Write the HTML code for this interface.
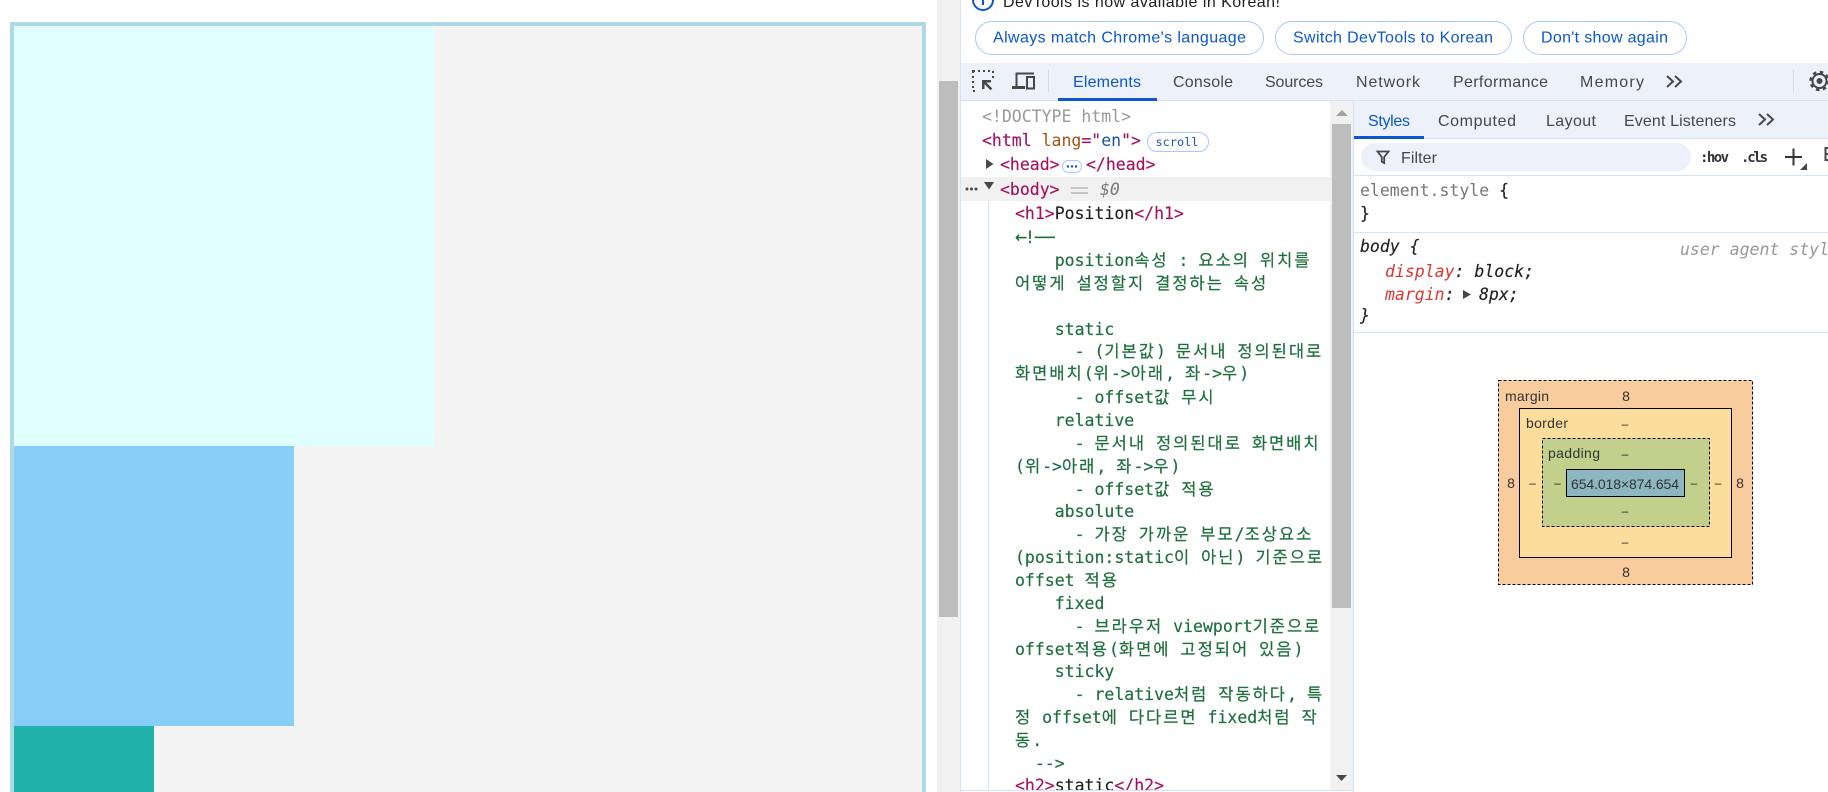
<!DOCTYPE html>
<html lang="en"><head><meta charset="utf-8"><title>DevTools</title>
<style>
html,body{margin:0;padding:0;background:#fff;width:1828px;height:792px;overflow:hidden}
svg{display:block}
text{white-space:pre}
.m{font-family:"DejaVu Sans Mono","Liberation Mono","Noto Sans CJK KR",monospace;font-size:16.5px}
.k{font-family:"Noto Sans CJK KR","NanumGothic",sans-serif;font-size:16.5px;letter-spacing:2px}
.c{fill:#1e6f3e;stroke:#1e6f3e;stroke-width:.2px}
.g{fill:#1f1f1f;stroke:#1f1f1f;stroke-width:.15px}
.tg{fill:#a5115f;stroke:#a5115f;stroke-width:.15px}
.s{font-family:"Liberation Sans",Arial,sans-serif;font-size:16px}
.tab{fill:#474747}
.btn{fill:#0b57d0}
.bm{font-family:"Liberation Sans",Arial,sans-serif;font-size:14px;fill:#333}
.d{font-family:"Liberation Sans",Arial,sans-serif;font-size:12px;fill:#222;text-anchor:middle}
.mid{text-anchor:middle}
.it{font-style:italic}
</style></head>
<body>
<svg width="1828" height="792" viewBox="0 0 1828 792" xmlns="http://www.w3.org/2000/svg">
<!-- page -->
<rect x="10" y="22" width="916" height="780" fill="#add8e6"/>
<rect x="14" y="26" width="908" height="770" fill="#f4f4f4"/>
<rect x="14" y="26" width="420" height="420" fill="#e0ffff"/>
<rect x="14" y="446" width="280" height="280" fill="#87cefa"/>
<rect x="14" y="726" width="140" height="70" fill="#20b2aa"/>
<rect x="937" y="0" width="23" height="792" fill="#f1f1f1"/>
<rect x="939" y="81" width="19" height="536" fill="#bdbdbd"/>
<rect x="960" y="0" width="1" height="792" fill="#d3e3fd"/>

<!-- info bar -->
<circle cx="983" cy="0" r="10" fill="none" stroke="#0b57d0" stroke-width="2"/>
<rect x="982" y="0" width="2" height="5" fill="#0b57d0"/>
<text x="1003" y="7" class="s" fill="#1f1f1f" textLength="277">DevTools is now available in Korean!</text>
<rect x="975.5" y="21.5" width="288" height="33" rx="16.5" fill="#fff" stroke="#a8c7fa"/>
<rect x="1275.5" y="21.5" width="236" height="33" rx="16.5" fill="#fff" stroke="#a8c7fa"/>
<rect x="1523.5" y="21.5" width="163" height="33" rx="16.5" fill="#fff" stroke="#a8c7fa"/>
<text x="993" y="42.5" class="s btn" textLength="253">Always match Chrome's language</text>
<text x="1293" y="42.5" class="s btn" textLength="200">Switch DevTools to Korean</text>
<text x="1541" y="42.5" class="s btn" textLength="127">Don't show again</text>

<!-- main tab bar -->
<rect x="961" y="63" width="867" height="37" fill="#ecf1fa"/>
<rect x="961" y="100" width="867" height="1" fill="#d3e3fd"/>
<path d="M973 91h2M973 88v-2M973 83v-2M973 78v-2M973 73v-2h2M978 71h2M983 71h2M988 71h2M993 71v2M993 76v2" stroke="#474747" stroke-width="2" fill="none"/>
<path d="M982 80h9v2.500h-4.700l6 6-1.800 1.800-6-6v4.700h-2.500z" fill="#474747"/>
<path d="M1016.500 87V73.500H1034" stroke="#474747" stroke-width="2" fill="none"/>
<rect x="1012" y="86" width="13" height="3" fill="#474747"/>
<rect x="1027" y="77" width="7" height="11.500" fill="none" stroke="#474747" stroke-width="2"/>
<rect x="1048" y="70" width="1" height="22" fill="#d3dbe9"/>
<text x="1073" y="87" class="s btn" textLength="68">Elements</text>
<rect x="1058" y="98" width="99" height="3" fill="#0b57d0"/>
<text x="1173" y="87" class="s tab" textLength="60">Console</text>
<text x="1265" y="87" class="s tab" textLength="58">Sources</text>
<text x="1356" y="87" class="s tab" textLength="64">Network</text>
<text x="1453" y="87" class="s tab" textLength="95">Performance</text>
<text x="1580" y="87" class="s tab" textLength="64">Memory</text>
<path d="M1667 76l6 5.500-6 5.500M1675 76l6 5.500-6 5.500" fill="none" stroke="#474747" stroke-width="2"/>
<rect x="1793" y="70" width="1" height="22" fill="#d3dbe9"/>
<circle cx="1819.500" cy="81" r="7" fill="none" stroke="#474747" stroke-width="2"/>
<circle cx="1819.500" cy="81" r="9" fill="none" stroke="#474747" stroke-width="2.500" stroke-dasharray="3.500 3.570"/>
<circle cx="1819.500" cy="81" r="3" fill="#474747"/>

<!-- element tree -->
<rect x="961" y="177" width="369" height="24" fill="#f1f1f1"/>
<rect x="988" y="201" width="1" height="590" fill="#d3e3fd"/>
<text x="982" y="122" class="m" fill="#999">&lt;!DOCTYPE html&gt;</text>
<text x="982" y="146" class="m"><tspan class="tg">&lt;html </tspan><tspan fill="#a9510f">lang</tspan><tspan class="tg">="</tspan><tspan fill="#1a4f9f">en</tspan><tspan class="tg">"&gt;</tspan></text>
<rect x="1147.500" y="132.500" width="61" height="19" rx="9.500" fill="#fff" stroke="#a8c7fa"/>
<text x="1155.500" y="146" font-family="DejaVu Sans Mono,monospace" font-size="11.800" fill="#1a56b0" textLength="43">scroll</text>
<path d="M987 160l7.500 5-7.500 5z" fill="#474747" transform="translate(-1 -1)"/>
<text x="1000" y="170" class="m tg">&lt;head&gt;</text>
<rect x="1062.500" y="160.500" width="19" height="12" rx="6" fill="#fff" stroke="#a8c7fa"/>
<circle cx="1068" cy="166.500" r="1.200" fill="#0b57d0"/><circle cx="1072" cy="166.500" r="1.200" fill="#0b57d0"/><circle cx="1076" cy="166.500" r="1.200" fill="#0b57d0"/>
<text x="1086" y="170" class="m tg">&lt;/head&gt;</text>
<circle cx="967" cy="189" r="1.500" fill="#474747"/><circle cx="971.500" cy="189" r="1.500" fill="#474747"/><circle cx="976" cy="189" r="1.500" fill="#474747"/>
<path d="M984 182h10l-5 7.500z" fill="#474747"/>
<text x="1000" y="195" class="m tg">&lt;body&gt;</text>
<path d="M1071 188h17M1071 193h17" stroke="#999" stroke-width="1"/>
<text x="1100" y="195" class="m it" fill="#777">$0</text>
<text x="1015" y="219" class="m"><tspan class="tg">&lt;h1&gt;</tspan><tspan class="g">Position</tspan><tspan class="tg">&lt;/h1&gt;</tspan></text>
<text x="1015" y="243" class="m c"><tspan font-size="20">←</tspan><tspan dx="-2">!──</tspan></text>
<text x="1015" y="266" class="m c">    position<tspan class="k">속성</tspan> : <tspan class="k">요소의</tspan> <tspan class="k">위치를</tspan></text>
<text x="1015" y="289" class="m c"><tspan class="k">어떻게</tspan> <tspan class="k">설정할지</tspan> <tspan class="k">결정하는</tspan> <tspan class="k">속성</tspan></text>
<text x="1015" y="335" class="m c">    static</text>
<text x="1015" y="357" class="m c">      - (<tspan class="k">기본값</tspan>) <tspan class="k">문서내</tspan> <tspan class="k">정의된대로</tspan></text>
<text x="1015" y="379" class="m c"><tspan class="k">화면배치</tspan>(<tspan class="k">위</tspan>-&gt;<tspan class="k">아래</tspan>, <tspan class="k">좌</tspan>-&gt;<tspan class="k">우</tspan>)</text>
<text x="1015" y="403" class="m c">      - offset<tspan class="k">값</tspan> <tspan class="k">무시</tspan></text>
<text x="1015" y="426" class="m c">    relative</text>
<text x="1015" y="449" class="m c">      - <tspan class="k">문서내</tspan> <tspan class="k">정의된대로</tspan> <tspan class="k">화면배치</tspan></text>
<text x="1015" y="472" class="m c">(<tspan class="k">위</tspan>-&gt;<tspan class="k">아래</tspan>, <tspan class="k">좌</tspan>-&gt;<tspan class="k">우</tspan>)</text>
<text x="1015" y="495" class="m c">      - offset<tspan class="k">값</tspan> <tspan class="k">적용</tspan></text>
<text x="1015" y="517" class="m c">    absolute</text>
<text x="1015" y="540" class="m c">      - <tspan class="k">가장</tspan> <tspan class="k">가까운</tspan> <tspan class="k">부모</tspan>/<tspan class="k">조상요소</tspan></text>
<text x="1015" y="563" class="m c">(position:static<tspan class="k">이</tspan> <tspan class="k">아닌</tspan>) <tspan class="k">기준으로</tspan></text>
<text x="1015" y="586" class="m c">offset <tspan class="k">적용</tspan></text>
<text x="1015" y="609" class="m c">    fixed</text>
<text x="1015" y="632" class="m c">      - <tspan class="k">브라우저</tspan> viewport<tspan class="k">기준으로</tspan></text>
<text x="1015" y="655" class="m c">offset<tspan class="k">적용</tspan>(<tspan class="k">화면에</tspan> <tspan class="k">고정되어</tspan> <tspan class="k">있음</tspan>)</text>
<text x="1015" y="677" class="m c">    sticky</text>
<text x="1015" y="700" class="m c">      - relative<tspan class="k">처럼</tspan> <tspan class="k">작동하다</tspan>, <tspan class="k">특</tspan></text>
<text x="1015" y="723" class="m c"><tspan class="k">정</tspan> offset<tspan class="k">에</tspan> <tspan class="k">다다르면</tspan> fixed<tspan class="k">처럼</tspan> <tspan class="k">작</tspan></text>
<text x="1015" y="746" class="m c"><tspan class="k">동</tspan>.</text>
<text x="1015" y="769" class="m c">  --&gt;</text>
<text x="1015" y="791" class="m"><tspan class="tg">&lt;h2&gt;</tspan><tspan class="g">static</tspan><tspan class="tg">&lt;/h2&gt;</tspan></text>
<rect x="961" y="790" width="392" height="2" fill="#fff"/>
<rect x="961" y="790" width="392" height="1" fill="#d3e3fd"/>
<!-- tree scrollbar -->
<rect x="1330" y="101" width="23" height="689" fill="#f1f1f1"/>
<rect x="1332" y="124" width="19" height="484" fill="#bdbdbd"/>
<path d="M1336 116l6-6 6 6z" fill="#a3a3a3"/>
<path d="M1336 775h11l-5.500 6z" fill="#474747"/>
<rect x="1353" y="101" width="1" height="691" fill="#d3e3fd"/>

<!-- styles pane -->
<rect x="1354" y="101" width="474" height="38" fill="#ecf1fa"/>
<rect x="1354" y="138" width="474" height="1" fill="#d3e3fd"/>
<rect x="1354" y="136" width="70" height="3" fill="#0b57d0"/>
<text x="1368" y="126" class="s btn" textLength="42">Styles</text>
<text x="1438" y="126" class="s tab" textLength="78">Computed</text>
<text x="1546" y="126" class="s tab" textLength="50">Layout</text>
<text x="1624" y="126" class="s tab" textLength="112">Event Listeners</text>
<path d="M1759 114l6 5.500-6 5.500M1767 114l6 5.500-6 5.500" fill="none" stroke="#474747" stroke-width="2"/>
<rect x="1361" y="143" width="330" height="28" rx="14" fill="#ecf1fa"/>
<path d="M1377.500 151.500h11l-4.300 5.500v6l-2.400-1.300v-4.700z" fill="none" stroke="#474747" stroke-width="1.800"/>
<text x="1401" y="163" class="s tab" textLength="36">Filter</text>
<text x="1700" y="162" font-family="DejaVu Sans Mono,monospace" font-weight="bold" font-size="14" fill="#333" textLength="29">:hov</text>
<text x="1741" y="162" font-family="DejaVu Sans Mono,monospace" font-weight="bold" font-size="14" fill="#333" textLength="27">.cls</text>
<path d="M1785 157h17M1793.500 148.500v17" stroke="#333" stroke-width="2"/>
<path d="M1807 163v7h-7z" fill="#474747"/>
<path d="M1829 148h-3.500v12h3.500M1825.500 154h4" fill="none" stroke="#474747" stroke-width="2"/>
<rect x="1354" y="175" width="474" height="1" fill="#d3e3fd"/>
<text x="1360" y="196" class="m"><tspan fill="#777">element.style</tspan><tspan class="g"> {</tspan></text>
<text x="1360" y="219" class="m g">}</text>
<rect x="1354" y="232" width="474" height="1" fill="#d3e3fd"/>
<text x="1360" y="252" class="m g it">body {</text>
<text x="1680" y="255" class="m it" fill="#999">user agent stylesheet</text>
<text x="1385" y="277" class="m it"><tspan fill="#dc362e">display</tspan><tspan class="g">: block;</tspan></text>
<text x="1385" y="300" class="m it"><tspan fill="#dc362e">margin</tspan><tspan class="g">:</tspan></text>
<path d="M1463 290l8 4.500-8 4.500z" fill="#474747"/>
<text x="1479" y="300" class="m it g">8px;</text>
<text x="1360" y="321" class="m g it">}</text>
<rect x="1354" y="332" width="474" height="1" fill="#d3e3fd"/>

<!-- box model -->
<rect x="1498.500" y="380.500" width="254" height="204" fill="#f9cc9d" stroke="#000" stroke-dasharray="3 2"/>
<rect x="1519.500" y="408.500" width="212" height="149" fill="#fddd9b" stroke="#000"/>
<rect x="1542.500" y="438.500" width="167" height="88" fill="#c3d08b" stroke="#000" stroke-dasharray="3 2"/>
<rect x="1566.500" y="469.500" width="118" height="27" fill="#8cb6c0" stroke="#000"/>
<text x="1505" y="401" class="bm" textLength="44">margin</text>
<text x="1626" y="401" class="bm mid">8</text>
<text x="1526" y="428" class="bm" textLength="42">border</text>
<text x="1548" y="458" class="bm" textLength="52">padding</text>
<text x="1625" y="428" class="d">–</text>
<text x="1625" y="458" class="d">–</text>
<text x="1625" y="515" class="d">–</text>
<text x="1625" y="546" class="d">–</text>
<text x="1626" y="577" class="bm mid">8</text>
<text x="1511" y="488" class="bm mid">8</text>
<text x="1740" y="488" class="bm mid">8</text>
<text x="1532.500" y="487" class="d">–</text>
<text x="1557.500" y="487" class="d">–</text>
<text x="1694" y="487" class="d">–</text>
<text x="1718" y="487" class="d">–</text>
<text x="1571" y="489" class="bm" textLength="108">654.018×874.654</text>
</svg>
</body></html>
